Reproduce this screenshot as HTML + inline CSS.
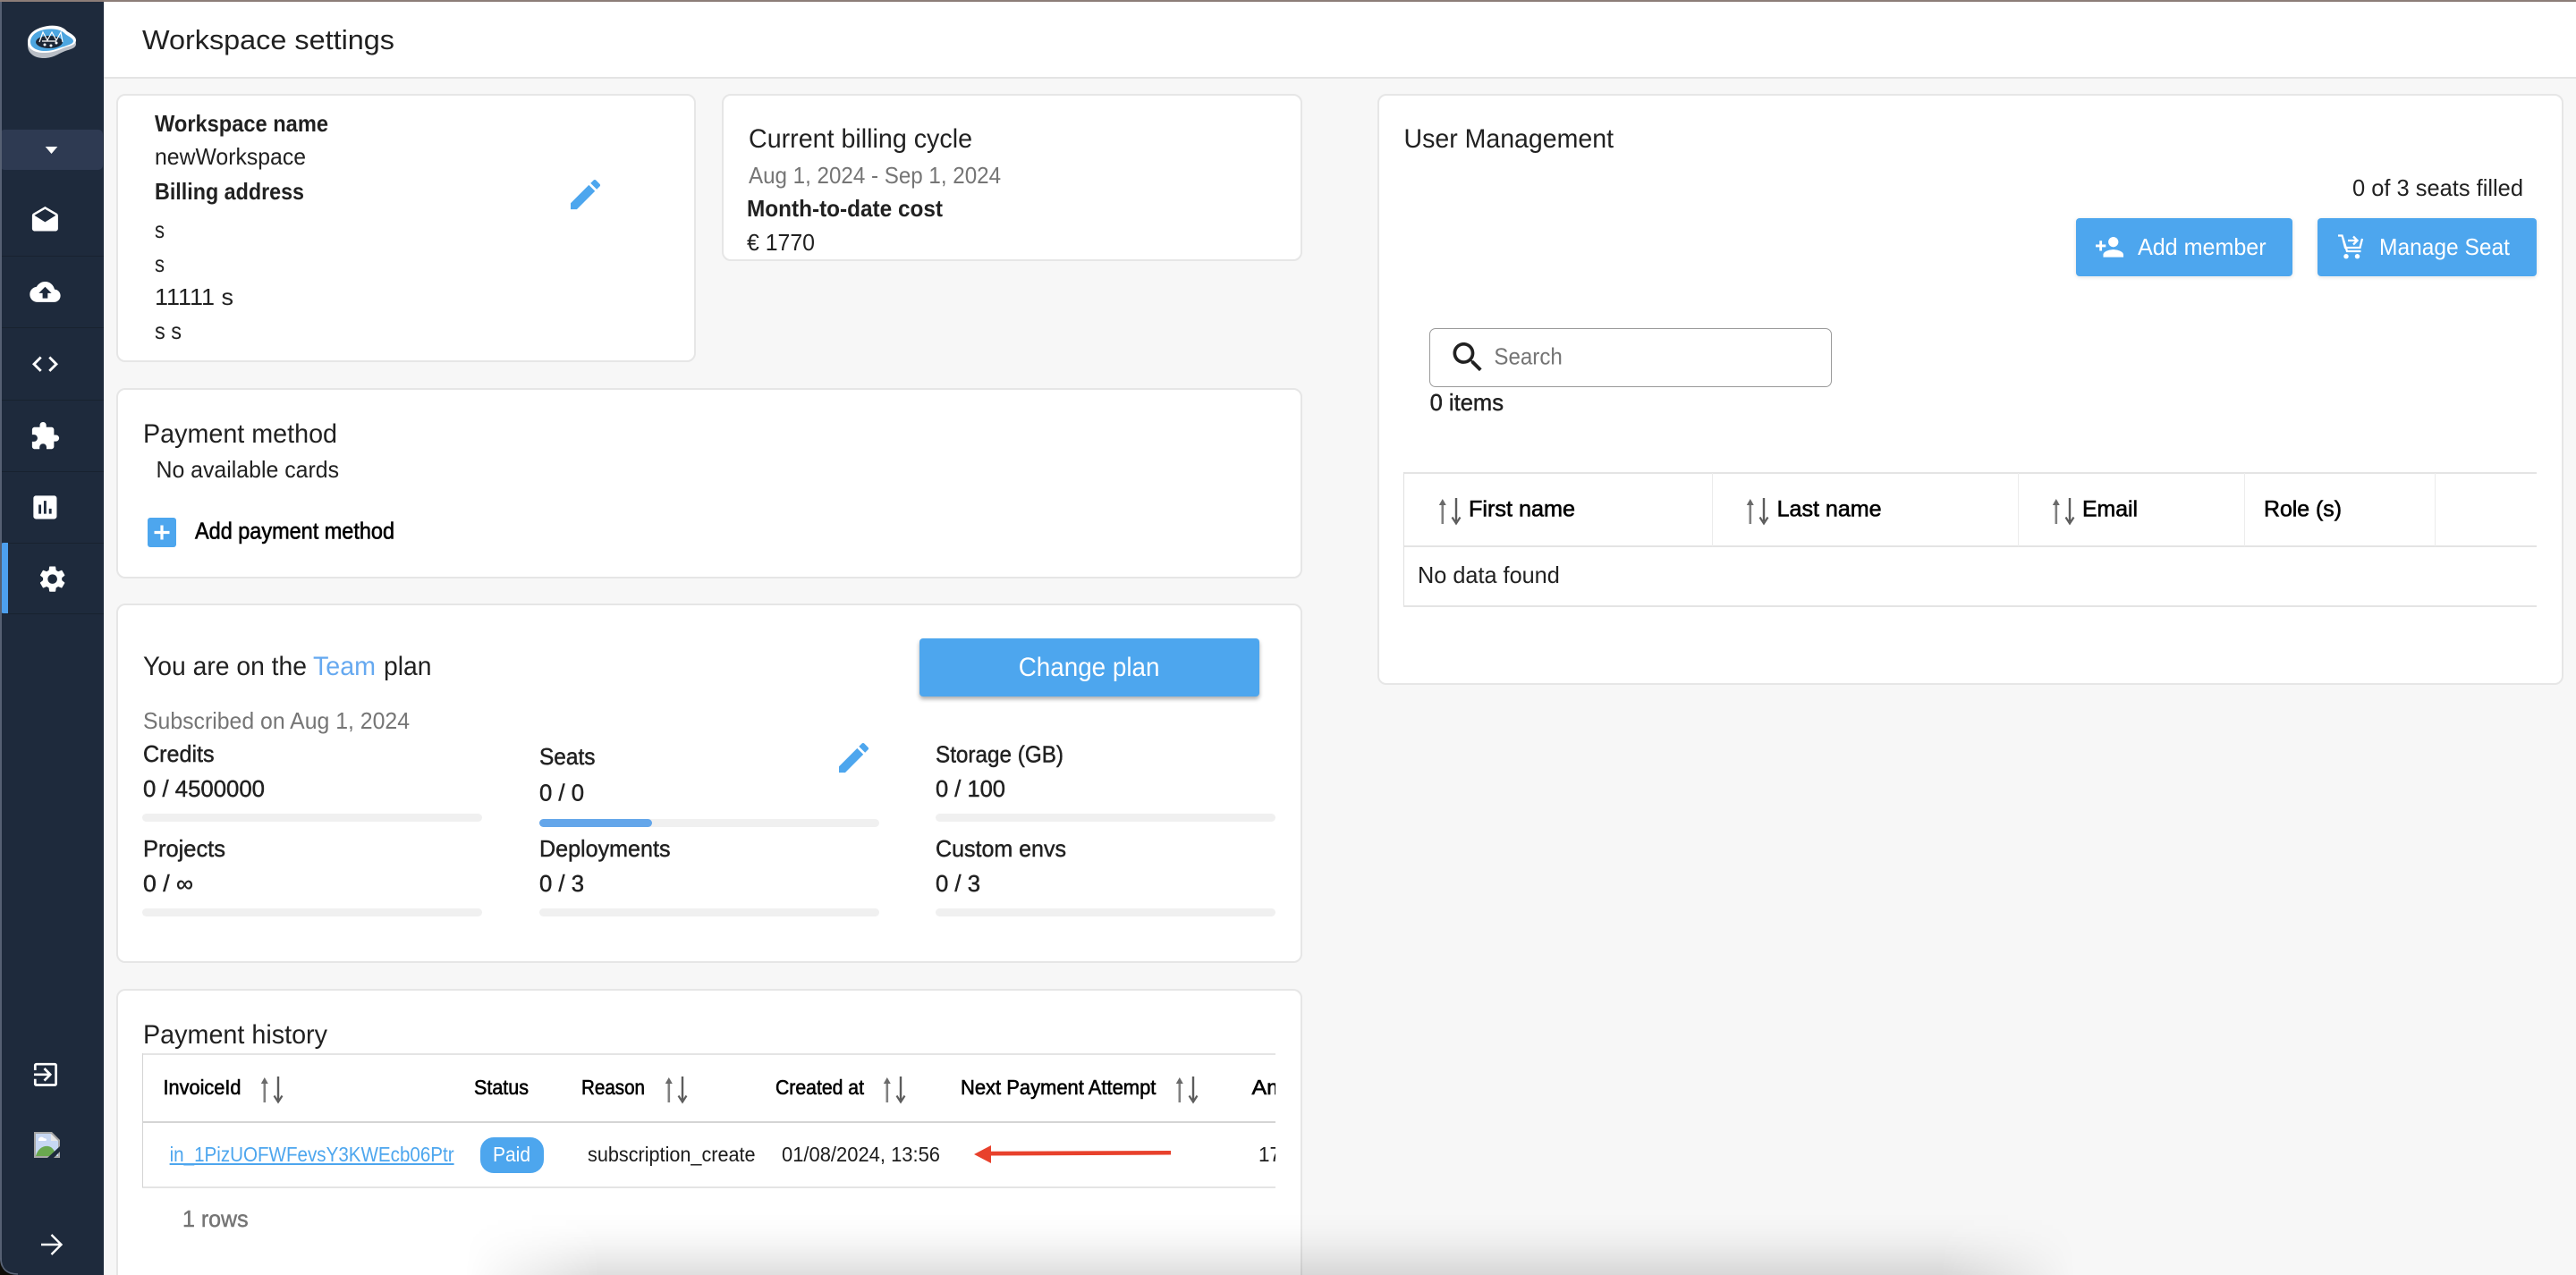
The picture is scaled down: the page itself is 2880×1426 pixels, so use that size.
<!DOCTYPE html>
<html lang="en">
<head>
<meta charset="utf-8">
<title>Workspace settings</title>
<style>
html,body{margin:0;padding:0;width:2880px;height:1426px;overflow:hidden;background:#f7f7f7;font-family:"Liberation Sans",sans-serif}
#app{position:relative;width:2880px;height:1426px;overflow:hidden;background:#f7f7f7}
.abs{position:absolute;box-sizing:border-box}
.card{position:absolute;box-sizing:border-box;background:#fff;border:2px solid #e6e6e6;border-radius:10px}
.bar{position:absolute;background:#f0f0f0;border-radius:5px;height:9px}
.btn{position:absolute;background:#4da6ee;border-radius:4px}
svg.ov{position:absolute;left:0;top:0}
text{font-family:"Liberation Sans",sans-serif;fill:#212121;font-size:25.7px}
.t{font-size:29.4px}
.b{font-weight:700}
.m{stroke:#212121;stroke-width:.45px}
.g{fill:#757575}
.h{font-size:23px;fill:#000;stroke:#000;stroke-width:.6px}
.r{font-size:23px;fill:#1c1c1c}
.w{fill:#fff}
</style>
</head>
<body>
<div id="app">
<div class="abs" style="left:0;top:0;width:2880px;height:88px;background:#fff;border-bottom:2px solid #e4e4e4"></div>

<div class="card" style="left:130px;top:105px;width:648px;height:300px"></div>
<div class="card" style="left:807px;top:105px;width:649px;height:187px"></div>
<div class="card" style="left:130px;top:434px;width:1326px;height:213px"></div>
<div class="card" style="left:130px;top:675px;width:1326px;height:402px"></div>
<div class="card" style="left:130px;top:1106px;width:1326px;height:320px;border-bottom:0;border-radius:10px 10px 0 0"></div>
<div class="card" style="left:1540px;top:105px;width:1326px;height:661px"></div>

<div class="bar" style="left:159px;top:910px;width:380px"></div>
<div class="bar" style="left:603px;top:916px;width:380px"></div>
<div class="bar" style="left:603px;top:916px;width:126px;background:#64a6ea"></div>
<div class="bar" style="left:1046px;top:910px;width:380px"></div>
<div class="bar" style="left:159px;top:1016px;width:380px"></div>
<div class="bar" style="left:603px;top:1016px;width:380px"></div>
<div class="bar" style="left:1046px;top:1016px;width:380px"></div>

<div class="btn" style="left:1028px;top:714px;width:380px;height:65px;box-shadow:0 3px 5px rgba(0,0,0,.32)"></div>
<div class="btn" style="left:2321px;top:244px;width:242px;height:65px;box-shadow:0 1px 5px rgba(0,0,0,.12)"></div>
<div class="btn" style="left:2591px;top:244px;width:245px;height:65px;box-shadow:0 1px 5px rgba(0,0,0,.12)"></div>
<div class="abs" style="left:165px;top:579px;width:32px;height:33px;background:#4da6ee;border-radius:3px"></div>
<div class="abs" style="left:537px;top:1272px;width:71px;height:40px;background:#4da6ee;border-radius:15px"></div>
<div class="abs" style="left:1598px;top:367px;width:450px;height:66px;border:1.5px solid #9a9a9a;border-radius:7px;background:#fff"></div>

<!-- Payment table lines -->
<div class="abs" style="left:159px;top:1178px;width:1267px;height:2px;background:#e4e4e4"></div>
<div class="abs" style="left:159px;top:1254px;width:1267px;height:2px;background:#d4d4d4"></div>
<div class="abs" style="left:159px;top:1327px;width:1267px;height:2px;background:#e4e4e4"></div>
<div class="abs" style="left:159px;top:1178px;width:1px;height:150px;background:#d4d4d4"></div>

<!-- User table lines -->
<div class="abs" style="left:1569px;top:528px;width:1267px;height:2px;background:#e4e4e4"></div>
<div class="abs" style="left:1569px;top:610px;width:1267px;height:2px;background:#e4e4e4"></div>
<div class="abs" style="left:1569px;top:677px;width:1267px;height:2px;background:#e4e4e4"></div>
<div class="abs" style="left:1569px;top:528px;width:1px;height:150px;background:#e0e0e0"></div>
<div class="abs" style="left:1914px;top:529px;width:1px;height:82px;background:#ececec"></div>
<div class="abs" style="left:2256px;top:529px;width:1px;height:82px;background:#ececec"></div>
<div class="abs" style="left:2509px;top:529px;width:1px;height:82px;background:#ececec"></div>
<div class="abs" style="left:2722px;top:529px;width:1px;height:82px;background:#ececec"></div>

<!-- Bottom shadow -->
<div class="abs" style="left:520px;top:1356px;width:1800px;height:70px;background:linear-gradient(180deg,rgba(0,0,0,0) 0%,rgba(0,0,0,.012) 25%,rgba(0,0,0,.04) 50%,rgba(0,0,0,.085) 78%,rgba(0,0,0,.125) 100%);-webkit-mask-image:linear-gradient(90deg,transparent 0,#000 150px,#000 1650px,transparent 1800px);mask-image:linear-gradient(90deg,transparent 0,#000 150px,#000 1650px,transparent 1800px)"></div>

<!-- Sidebar -->
<div class="abs" style="left:0;top:0;width:116px;height:1426px;background:#1e2a3c"></div>
<div class="abs" style="left:0;top:145px;width:115px;height:45px;background:#2e3a52;border-radius:5px"></div>
<div class="abs" style="left:2px;top:286px;width:114px;height:1px;background:#18222f"></div>
<div class="abs" style="left:2px;top:366px;width:114px;height:1px;background:#18222f"></div>
<div class="abs" style="left:2px;top:447px;width:114px;height:1px;background:#18222f"></div>
<div class="abs" style="left:2px;top:527px;width:114px;height:1px;background:#18222f"></div>
<div class="abs" style="left:2px;top:607px;width:114px;height:1px;background:#18222f"></div>
<div class="abs" style="left:2px;top:686px;width:114px;height:1px;background:#18222f"></div>
<div class="abs" style="left:0;top:607px;width:9px;height:79px;background:#4d9fee;border-radius:4px 0 0 4px"></div>
<div class="abs" style="left:0;top:0;width:2px;height:1426px;background:#566073"></div>
<div class="abs" style="left:0;top:0;width:2880px;height:2px;background:#8c7d78"></div>

<svg class="ov" width="2880" height="1426" viewBox="0 0 2880 1426" xmlns="http://www.w3.org/2000/svg">
<defs>
<clipPath id="tc"><rect x="1380" y="1180" width="46" height="140"/></clipPath>
<g id="sort">
  <path d="M5.8 29V3" stroke="#808080" stroke-width="2.600" fill="none"/>
  <path d="M1.800 8L5.800 1l4 7z" fill="#6a6a6a"/>
  <path d="M21 0v26" stroke="#5c5c5c" stroke-width="2.400" fill="none"/>
  <path d="M16.500 21.500L21 28.500l4.500-7" stroke="#5c5c5c" stroke-width="2.200" fill="none"/>
</g>
<path id="edit" d="M3 17.25V21h3.75L17.81 9.94l-3.75-3.75L3 17.25zM20.71 7.04c.39-.39.39-1.02 0-1.41l-2.34-2.34c-.39-.39-1.02-.39-1.41 0l-1.83 1.83 3.75 3.75 1.83-1.83z"/>
</defs>

<!-- Header -->
<text class="t" x="159" y="55" style="font-size:30.5px" textLength="282" lengthAdjust="spacingAndGlyphs">Workspace settings</text>

<!-- Workspace card -->
<text class="b" x="173" y="147" textLength="194" lengthAdjust="spacingAndGlyphs">Workspace name</text>
<text x="173" y="184" textLength="169" lengthAdjust="spacingAndGlyphs">newWorkspace</text>
<text class="b" x="173" y="223" textLength="167" lengthAdjust="spacingAndGlyphs">Billing address</text>
<text x="173" y="266" textLength="11" lengthAdjust="spacingAndGlyphs">s</text>
<text x="173" y="304" textLength="11" lengthAdjust="spacingAndGlyphs">s</text>
<text x="173" y="341" textLength="88" lengthAdjust="spacingAndGlyphs">11111 s</text>
<text x="173" y="379" textLength="30" lengthAdjust="spacingAndGlyphs">s s</text>
<use href="#edit" transform="translate(632.5 195.5) scale(1.837)" fill="#4da6ee"/>

<!-- Billing cycle -->
<text class="t" x="837" y="165" textLength="250" lengthAdjust="spacingAndGlyphs">Current billing cycle</text>
<text class="g" x="837" y="205" textLength="282" lengthAdjust="spacingAndGlyphs">Aug 1, 2024 - Sep 1, 2024</text>
<text class="b" x="835" y="242" textLength="219" lengthAdjust="spacingAndGlyphs">Month-to-date cost</text>
<text x="835" y="280" textLength="76" lengthAdjust="spacingAndGlyphs">€ 1770</text>

<!-- Payment method -->
<text class="t" x="160" y="495" textLength="217" lengthAdjust="spacingAndGlyphs">Payment method</text>
<text x="174.500" y="534" textLength="204.500" lengthAdjust="spacingAndGlyphs">No available cards</text>
<path d="M172.500 595.500h17M181 587.500v16" stroke="#fff" stroke-width="3.200" fill="none"/>
<text x="218" y="602.700" textLength="223" lengthAdjust="spacingAndGlyphs" style="fill:#000;stroke:#000;stroke-width:.6px">Add payment method</text>

<!-- Plan -->
<text class="t" x="160" y="755" textLength="183" lengthAdjust="spacingAndGlyphs">You are on the</text>
<text class="t" x="350" y="755" textLength="70" lengthAdjust="spacingAndGlyphs" style="fill:#66a9f0">Team</text>
<text class="t" x="429" y="755" textLength="53.500" lengthAdjust="spacingAndGlyphs">plan</text>
<text class="g" x="160" y="815" textLength="298" lengthAdjust="spacingAndGlyphs">Subscribed on Aug 1, 2024</text>
<text class="w" x="1138.700" y="756" textLength="157.800" lengthAdjust="spacingAndGlyphs" style="font-size:29.4px">Change plan</text>

<text class="m" x="160" y="852" textLength="79.600" lengthAdjust="spacingAndGlyphs">Credits</text>
<text class="m" x="160" y="891" textLength="136" lengthAdjust="spacingAndGlyphs">0 / 4500000</text>
<text class="m" x="160" y="958" textLength="92" lengthAdjust="spacingAndGlyphs">Projects</text>
<text class="m" x="160" y="997" textLength="56" lengthAdjust="spacingAndGlyphs">0 / ∞</text>
<text class="m" x="603" y="855" textLength="62.500" lengthAdjust="spacingAndGlyphs">Seats</text>
<text class="m" x="603" y="895.700" textLength="50" lengthAdjust="spacingAndGlyphs">0 / 0</text>
<text class="m" x="603" y="958" textLength="146.500" lengthAdjust="spacingAndGlyphs">Deployments</text>
<text class="m" x="603" y="997" textLength="50" lengthAdjust="spacingAndGlyphs">0 / 3</text>
<text class="m" x="1046" y="852.700" textLength="143" lengthAdjust="spacingAndGlyphs">Storage (GB)</text>
<text class="m" x="1046" y="891" textLength="78" lengthAdjust="spacingAndGlyphs">0 / 100</text>
<text class="m" x="1046" y="958" textLength="146" lengthAdjust="spacingAndGlyphs">Custom envs</text>
<text class="m" x="1046" y="997" textLength="50" lengthAdjust="spacingAndGlyphs">0 / 3</text>
<use href="#edit" transform="translate(932.5 825.5) scale(1.837)" fill="#4da6ee"/>

<!-- Payment history -->
<text class="t" x="160" y="1167" textLength="206" lengthAdjust="spacingAndGlyphs">Payment history</text>
<text class="h" x="182.500" y="1224" textLength="87" lengthAdjust="spacingAndGlyphs">InvoiceId</text>
<use href="#sort" x="290" y="1204"/>
<text class="h" x="530" y="1224" textLength="61" lengthAdjust="spacingAndGlyphs">Status</text>
<text class="h" x="650" y="1224" textLength="71" lengthAdjust="spacingAndGlyphs">Reason</text>
<use href="#sort" x="742" y="1204"/>
<text class="h" x="867" y="1224" textLength="99" lengthAdjust="spacingAndGlyphs">Created at</text>
<use href="#sort" x="986" y="1204"/>
<text class="h" x="1074" y="1224" textLength="218.400" lengthAdjust="spacingAndGlyphs">Next Payment Attempt</text>
<use href="#sort" x="1313" y="1204"/>
<g clip-path="url(#tc)">
<text class="h" x="1399.500" y="1224" textLength="86" lengthAdjust="spacingAndGlyphs">Amount</text>
<text class="r" x="1407" y="1299" textLength="50" lengthAdjust="spacingAndGlyphs">1770</text>
</g>
<text x="189.600" y="1299" textLength="318" lengthAdjust="spacingAndGlyphs" style="font-size:23px;fill:#4da6ee">in_1PizUOFWFevsY3KWEcb06Ptr</text>
<rect x="189.600" y="1301" width="318" height="2" fill="#4da6ee"/>
<text class="w" x="551" y="1299" textLength="42" lengthAdjust="spacingAndGlyphs" style="font-size:23px">Paid</text>
<text class="r" x="657" y="1299" textLength="187.600" lengthAdjust="spacingAndGlyphs">subscription_create</text>
<text class="r" x="874" y="1299" textLength="177" lengthAdjust="spacingAndGlyphs">01/08/2024, 13:56</text>
<path d="M1089 1291L1108 1281v6.800L1309 1287v4.500L1108 1292.500V1301z" fill="#e8412c"/>
<text class="m g" x="204" y="1372" textLength="73.600" lengthAdjust="spacingAndGlyphs" style="stroke:#757575">1 rows</text>

<!-- User Management -->
<text class="t" x="1569.500" y="165" textLength="234.500" lengthAdjust="spacingAndGlyphs">User Management</text>
<text x="2630" y="219" textLength="191" lengthAdjust="spacingAndGlyphs">0 of 3 seats filled</text>
<g transform="translate(2341.6 259.4) scale(1.41)" fill="#fff"><path d="M15 12c2.21 0 4-1.790 4-4s-1.790-4-4-4-4 1.790-4 4 1.790 4 4 4zm-9-2V7H4v3H1v2h3v3h2v-3h3v-2H6zm9 4c-2.670 0-8 1.340-8 4v2h16v-2c0-2.660-5.330-4-8-4z"/></g>
<text class="w" x="2390" y="285" textLength="143.600" lengthAdjust="spacingAndGlyphs">Add member</text>
<g fill="none" stroke="#fff" stroke-width="2.300">
<path d="M2614 263.500h4.500l5.500 17.500h15.500M2619.500 267l2.500 10h16.500l2.500-10"/>
<path d="M2625 269h10M2631 264.500l4.500 4.500-4.500 4.500"/>
</g>
<circle cx="2623" cy="286.700" r="2.700" fill="#fff"/><circle cx="2635.500" cy="286.700" r="2.700" fill="#fff"/>
<text class="w" x="2660" y="285" textLength="146" lengthAdjust="spacingAndGlyphs">Manage Seat</text>
<g transform="translate(1619 377.500) scale(1.837)" fill="#212121"><path d="M15.500 14h-.79l-.28-.27C15.410 12.590 16 11.110 16 9.500 16 5.910 13.090 3 9.500 3S3 5.910 3 9.500 5.910 16 9.500 16c1.610 0 3.090-.59 4.230-1.570l.27.28v.79l5 4.990L20.490 19l-4.990-5zm-6 0C7.010 14 5 11.990 5 9.500S7.010 5 9.500 5 14 7.010 14 9.500 11.990 14 9.500 14z"/></g>
<text class="g" x="1670.400" y="407.700" textLength="76.400" lengthAdjust="spacingAndGlyphs">Search</text>
<text class="m" x="1598.600" y="459" textLength="82.400" lengthAdjust="spacingAndGlyphs">0 items</text>

<use href="#sort" x="1607" y="557"/>
<text class="h" x="1642" y="577.700" textLength="119" lengthAdjust="spacingAndGlyphs" style="font-size:25px">First name</text>
<use href="#sort" x="1951" y="557"/>
<text class="h" x="1986.600" y="577.700" textLength="117" lengthAdjust="spacingAndGlyphs" style="font-size:25px">Last name</text>
<use href="#sort" x="2293" y="557"/>
<text class="h" x="2328" y="577.700" textLength="62" lengthAdjust="spacingAndGlyphs" style="font-size:25px">Email</text>
<text class="h" x="2531" y="577.700" textLength="87" lengthAdjust="spacingAndGlyphs" style="font-size:25px">Role (s)</text>
<text x="1585" y="652" textLength="158.800" lengthAdjust="spacingAndGlyphs">No data found</text>

<!-- Sidebar: logo -->
<g>
<path d="M31 51c0-8 6-13 14-16 12-4 24-3 30 4 5 3 10 6 10 10 0 5-6 6-12 8-8 3-13 8-24 8-10 0-18-5-18-14z" fill="#b9bec6"/>
<path d="M31 47c0-8 6-13 14-16 12-4 24-3 30 4 5 3 10 6 10 10 0 5-6 6-12 8-8 3-13 6-24 6-10 0-18-4-18-12z" fill="#fff"/>
<path d="M34 47c0-6 5-11 12-13 10-3 22-2 27 4 4 3 9 5 9 8 0 3-5 4-10 6-8 2-12 5-22 5-9 0-16-4-16-10z" fill="#4da6e0"/>
<ellipse cx="55" cy="47" rx="15" ry="7" fill="#1b2635"/>
<path d="M44 47l4-11 5 9 5-9 5 9 5-9 2 11M47 46h16" stroke="#fff" stroke-width="1.200" fill="none"/>
<circle cx="50" cy="50" r="1.500" fill="#fff"/><circle cx="57" cy="51" r="1.500" fill="#fff"/><circle cx="63" cy="48" r="1.500" fill="#fff"/>
</g>
<path d="M50.700 164h13.600l-6.800 8z" fill="#fff"/>
<g fill="#fff">
<path transform="translate(33 229.500) scale(1.45)" d="M21.990 8c0-.72-.37-1.350-.94-1.700L12 1 2.950 6.300C2.380 6.650 2 7.280 2 8v10c0 1.100.9 2 2 2h16c1.100 0 2-.9 2-2l-.01-10zM12 13L3.740 7.840 12 3l8.260 4.840L12 13z"/>
<path transform="translate(33.300 309.300) scale(1.43)" d="M19.350 10.040C18.670 6.590 15.640 4 12 4 9.110 4 6.600 5.640 5.350 8.040 2.340 8.360 0 10.910 0 14c0 3.310 2.690 6 6 6h13c2.760 0 5-2.240 5-5 0-2.640-2.050-4.780-4.650-4.960zM14 13v4h-4v-4H7l5-5 5 5h-3z"/>
<path transform="translate(33.100 389.800) scale(1.45)" d="M9.400 16.600L4.800 12l4.600-4.600L8 6l-6 6 6 6 1.400-1.400zm5.200 0l4.600-4.600-4.600-4.600L16 6l6 6-6 6-1.400-1.400z"/>
<path transform="translate(33 470.600) scale(1.44)" d="M20.500 11H19V7c0-1.100-.9-2-2-2h-4V3.500C13 2.120 11.880 1 10.500 1S8 2.120 8 3.500V5H4c-1.100 0-1.990.9-1.990 2v3.800H3.500c1.490 0 2.700 1.210 2.700 2.700s-1.210 2.700-2.700 2.700H2V20c0 1.100.9 2 2 2h3.800v-1.500c0-1.490 1.210-2.700 2.700-2.700 1.490 0 2.700 1.210 2.700 2.700V22H17c1.100 0 2-.9 2-2v-4h1.500c1.380 0 2.500-1.120 2.500-2.500S21.880 11 20.500 11z"/>
<path transform="translate(33 550) scale(1.45)" d="M19 3H5c-1.100 0-2 .9-2 2v14c0 1.100.9 2 2 2h14c1.100 0 2-.9 2-2V5c0-1.100-.9-2-2-2zM9 17H7v-7h2v7zm4 0h-2V7h2v10zm4 0h-2v-4h2v4z"/>
<path transform="translate(41 630) scale(1.47)" d="M19.140 12.940c.04-.3.06-.61.06-.94 0-.32-.02-.64-.07-.94l2.030-1.580c.18-.14.23-.41.12-.61l-1.920-3.320c-.12-.22-.37-.29-.59-.22l-2.390.96c-.5-.38-1.030-.7-1.620-.94l-.36-2.540c-.04-.24-.24-.41-.48-.41h-3.840c-.24 0-.43.17-.47.41l-.36 2.540c-.59.24-1.130.57-1.620.94l-2.390-.96c-.22-.08-.47 0-.59.22L2.740 8.870c-.12.21-.08.47.12.61l2.030 1.580c-.05.3-.09.63-.09.94s.02.64.07.94l-2.030 1.580c-.18.14-.23.41-.12.61l1.920 3.320c.12.22.37.29.59.22l2.390-.96c.5.38 1.030.7 1.620.94l.36 2.540c.05.24.24.41.48.41h3.840c.24 0 .44-.17.47-.41l.36-2.540c.59-.24 1.130-.56 1.620-.94l2.390.96c.22.08.47 0 .59-.22l1.920-3.320c.12-.22.07-.47-.12-.61l-2.010-1.580zM12 15.600c-1.980 0-3.600-1.620-3.600-3.600s1.620-3.600 3.600-3.600 3.600 1.620 3.600 3.600-1.620 3.600-3.600 3.600z"/>
</g>
<g fill="none" stroke="#fff" stroke-width="2.700">
<path d="M39.300 1197v-5.500a1.300 1.300 0 0 1 1.300-1.300h20.700a1.300 1.300 0 0 1 1.300 1.300v20.700a1.300 1.300 0 0 1-1.300 1.300H40.600a1.300 1.300 0 0 1-1.300-1.300v-5.500"/>
<path d="M38 1201.800h17.500M49.500 1195l6.700 6.800-6.700 6.800"/>
</g>
<g>
<path d="M38 1266h20l9 9v20H38z" fill="#a6a6a6"/>
<path d="M40 1268h17v8h8v17H40z" fill="#c7d7f2"/>
<path d="M40 1293c2-8 8-12 14-11 5 1 7 5 9 11z" fill="#6aa84f"/>
<path d="M43 1274c1-3 5-3 6-1 3 0 4 2 2 3h-8z" fill="#fff"/>
<path d="M57 1268l8 8h-8z" fill="#e8e8e8"/>
<path d="M52 1296l15-14v6l-8 8z" fill="#1e2a3c"/>
</g>
<path d="M46 1392h21.500M57.500 1381l11 11-11 11" fill="none" stroke="#fff" stroke-width="2.400"/>
<!-- Window corner -->
<path d="M0 1407c0 12 7 19 19 19H0z" fill="#0e0d08"/>
<path d="M1 1407c0 12 7 18 19 18" fill="none" stroke="#5a6476" stroke-width="1.600"/>
</svg>
</div>
</body>
</html>
